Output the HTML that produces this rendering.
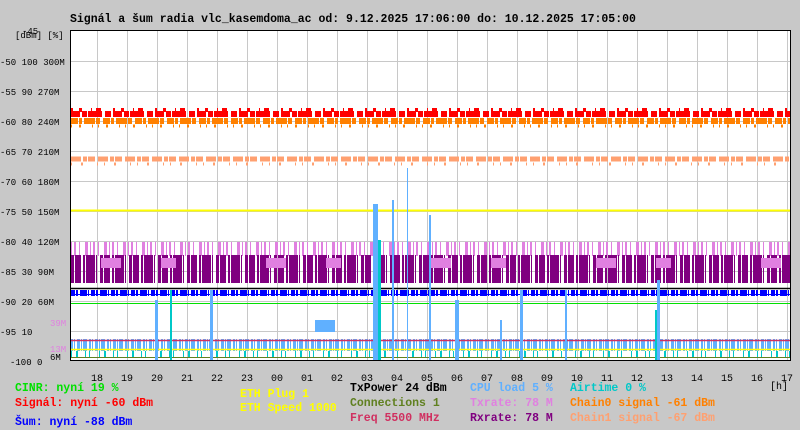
<!DOCTYPE html>
<html><head><meta charset="utf-8"><style>
body{margin:0;width:800px;height:430px;background:#c8c8c8;overflow:hidden;font-family:"Liberation Mono",monospace;}
svg{position:absolute;left:0;top:0}
.t{font-weight:bold;font-size:11.5px}
.a{font-size:9px;fill:#000}
</style></head><body>
<svg width="800" height="430" xmlns="http://www.w3.org/2000/svg" font-family="Liberation Mono, monospace">
<rect x="70" y="31" width="720" height="330" fill="#fff"/>
<g stroke="#c8c8c8" stroke-width="1">
<path d="M97.5 31V361M127.5 31V361M157.5 31V361M187.5 31V361M217.5 31V361M247.5 31V361M277.5 31V361M307.5 31V361M337.5 31V361M367.5 31V361M397.5 31V361M427.5 31V361M457.5 31V361M487.5 31V361M517.5 31V361M547.5 31V361M577.5 31V361M607.5 31V361M637.5 31V361M667.5 31V361M697.5 31V361M727.5 31V361M757.5 31V361M787.5 31V361"/>
<path d="M70 61.5H790M70 91.5H790M70 121.5H790M70 151.5H790M70 181.5H790M70 211.5H790M70 241.5H790M70 271.5H790M70 301.5H790M70 331.5H790"/>
</g>
<!-- signal bands -->
<g fill="none">
<path d="M71 114H790" stroke="#f00" stroke-width="6" stroke-dasharray="9 2 5 1 14 3 6 2"/>
<path d="M71 110H790" stroke="#f00" stroke-width="4" stroke-dasharray="2 6 3 9 1 4 5 12"/>
<path d="M71 121H790" stroke="#ff8000" stroke-width="6" stroke-dasharray="7 1 3 2 11 1 4 3"/>
<path d="M71 126H790" stroke="#ff8000" stroke-width="3" stroke-dasharray="1 7 2 11 1 5"/>
<path d="M71 159H790" stroke="#ffa070" stroke-width="5" stroke-dasharray="10 2 4 1 7 3"/>
<path d="M71 164H790" stroke="#ffa070" stroke-width="3" stroke-dasharray="1 9 2 14 1 6"/>
<path d="M70 210.5H790" stroke="#ff0" stroke-width="2"/>
<path d="M71 249H790" stroke="#e080e0" stroke-width="14" stroke-dasharray="1 2 2 3 1 5 3 2"/>
<path d="M71 269H790" stroke="#800080" stroke-width="28" stroke-dasharray="3 1 6 2 2 1 9 1 1 3"/>
<path d="M71 263H790" stroke="#e080e0" stroke-width="10" stroke-dasharray="0 30 20 40 15 60"/>
<path d="M70 288.5H790" stroke="#000" stroke-width="1.5"/>
<path d="M71 293H790" stroke="#0000ff" stroke-width="6" stroke-dasharray="4 1 2 2 7 1 1 2"/>
<path d="M70 294.5H790" stroke="#0000ff" stroke-width="1"/>
<path d="M70 303.5H790" stroke="#00e000" stroke-width="1"/>
<path d="M71 345H790" stroke="#60b0ff" stroke-width="12" stroke-dasharray="2 1 1 2 3 1 1 1 4 2"/>
<path d="M70 340.5H790" stroke="#d03060" stroke-width="1.5"/>
<path d="M70 349.5H790" stroke="#ff0" stroke-width="1.5"/>
<path d="M71 354H790" stroke="#00c8c8" stroke-width="6" stroke-dasharray="1 4 2 7 1 3 1 9"/>
<path d="M70 357.5H790" stroke="#608020" stroke-width="1"/>
</g>
<g fill="#60b0ff">
<rect x="373" y="204" width="5" height="156"/><rect x="392" y="200" width="2" height="160"/><rect x="407" y="168" width="1" height="192"/>
<rect x="429" y="215" width="2" height="145"/><rect x="155" y="300" width="3" height="60"/><rect x="210" y="290" width="3" height="70"/>
<rect x="315" y="320" width="20" height="12"/><rect x="520" y="290" width="3" height="70"/><rect x="657" y="280" width="3" height="80"/>
<rect x="565" y="290" width="2" height="70"/><rect x="455" y="300" width="4" height="60"/><rect x="500" y="320" width="2" height="40"/>
</g>
<g fill="#00c8c8"><rect x="378" y="240" width="3" height="120"/><rect x="170" y="290" width="2" height="70"/><rect x="655" y="310" width="2" height="50"/></g>
<rect x="70.5" y="30.5" width="720" height="330" fill="none" stroke="#000"/>
<text x="70" y="22" class="t" fill="#000">Signál a šum radia vlc_kasemdoma_ac od: 9.12.2025 17:06:00 do: 10.12.2025 17:05:00</text>
<g class="a" font-size="9">
<text x="15" y="38">[dBm] [%]</text><text x="22" y="34">-45</text>
<text x="0" y="65">-50 100 300M</text><text x="0" y="95">-55 90 270M</text><text x="0" y="125">-60 80 240M</text>
<text x="0" y="155">-65 70 210M</text><text x="0" y="185">-70 60 180M</text><text x="0" y="215">-75 50 150M</text>
<text x="0" y="245">-80 40 120M</text><text x="0" y="275">-85 30 90M</text><text x="0" y="305">-90 20 60M</text>
<text x="0" y="335">-95 10</text><text x="10" y="365">-100 0</text>
<text x="50" y="326" fill="#e080e0">39M</text><text x="50" y="352" fill="#e080e0">13M</text><text x="50" y="360">6M</text>
</g>
<g font-size="10" fill="#000" text-anchor="middle">
<text x="97" y="381">18</text><text x="127" y="381">19</text><text x="157" y="381">20</text><text x="187" y="381">21</text><text x="217" y="381">22</text><text x="247" y="381">23</text><text x="277" y="381">00</text><text x="307" y="381">01</text><text x="337" y="381">02</text><text x="367" y="381">03</text><text x="397" y="381">04</text><text x="427" y="381">05</text><text x="457" y="381">06</text><text x="487" y="381">07</text><text x="517" y="381">08</text><text x="547" y="381">09</text><text x="577" y="381">10</text><text x="607" y="381">11</text><text x="637" y="381">12</text><text x="667" y="381">13</text><text x="697" y="381">14</text><text x="727" y="381">15</text><text x="757" y="381">16</text><text x="787" y="381">17</text>
<text x="779" y="389">[h]</text>
</g>
<g class="t">
<text x="15" y="391" fill="#00e000">CINR: nyní 19 %</text>
<text x="15" y="406" fill="#f00">Signál: nyní -60 dBm</text>
<text x="15" y="425" fill="#0000ff">Šum: nyní -88 dBm</text>
<text x="240" y="397" fill="#ff0">ETH Plug 1</text>
<text x="240" y="411" fill="#ff0">ETH Speed 1000</text>
<text x="350" y="391" fill="#000">TxPower 24 dBm</text>
<text x="350" y="406" fill="#608020">Connections 1</text>
<text x="350" y="421" fill="#d03060">Freq 5500 MHz</text>
<text x="470" y="391" fill="#60b0ff">CPU load 5 %</text>
<text x="470" y="406" fill="#e080e0">Txrate: 78 M</text>
<text x="470" y="421" fill="#800080">Rxrate: 78 M</text>
<text x="570" y="391" fill="#00c8c8">Airtime 0 %</text>
<text x="570" y="406" fill="#ff8000">Chain0 signal -61 dBm</text>
<text x="570" y="421" fill="#ffa070">Chain1 signal -67 dBm</text>
</g>
</svg>
</body></html>
